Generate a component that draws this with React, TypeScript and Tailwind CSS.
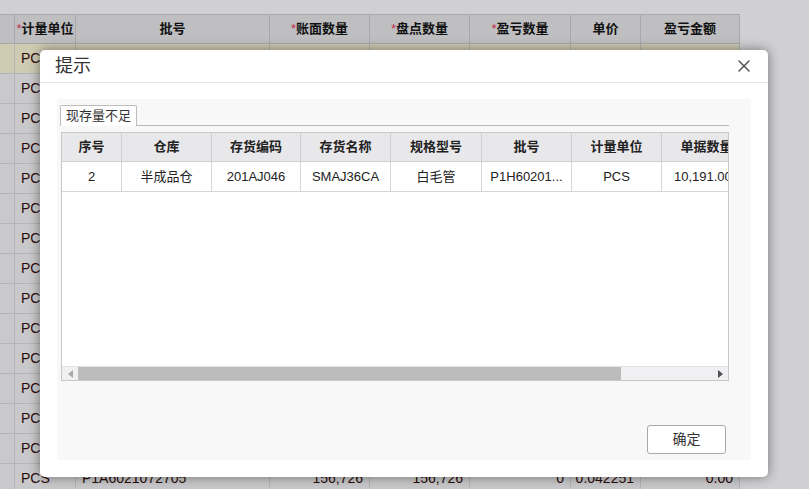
import { X } from "lucide-react";

const FONT = { fontFamily: '"Liberation Sans", "Noto Sans CJK SC", sans-serif' };

const bgCols = [
  { w: "w-[15px]", label: "" },
  { w: "w-[61px]", label: "计量单位", req: true },
  { w: "w-[194px]", label: "批号" },
  { w: "w-[100px]", label: "账面数量", req: true },
  { w: "w-[100px]", label: "盘点数量", req: true },
  { w: "w-[101px]", label: "盈亏数量", req: true },
  { w: "w-[70px]", label: "单价" },
  { w: "w-[99px]", label: "盈亏金额" },
];

const bgRow = ["", "PCS", "P1A6021072705", "156,726", "156,726", "0", "0.042251", "0.00"];

const dlgCols = [
  { w: "w-[60px]", label: "序号", v: "2" },
  { w: "w-[90px]", label: "仓库", v: "半成品仓" },
  { w: "w-[89px]", label: "存货编码", v: "201AJ046" },
  { w: "w-[90px]", label: "存货名称", v: "SMAJ36CA" },
  { w: "w-[91px]", label: "规格型号", v: "白毛管" },
  { w: "w-[90px]", label: "批号", v: "P1H60201..." },
  { w: "w-[90px]", label: "计量单位", v: "PCS" },
  { w: "w-[90px]", label: "单据数量", v: "10,191.000" },
];

function BackgroundGrid() {
  return (
    <div className="w-[809px] h-[489px] bg-[#d0d0d2] overflow-hidden">
      <div className="h-[14px]" />
      <div className="flex w-[740px] h-[30px] bg-[#bfbfc1] border-t border-b border-[#a9a9ab]">
        {bgCols.map((c, i) => (
          <div
            key={i}
            className={`${c.w} shrink-0 border-r border-[#a9a9ab] flex items-center justify-center text-[13px] font-bold text-[#111] whitespace-nowrap overflow-hidden`}
          >
            {c.req && <span className="text-[#c0304a] font-normal">*</span>}
            {c.label}
          </div>
        ))}
      </div>
      {Array.from({ length: 15 }).map((_, r) => (
        <div
          key={r}
          className={`flex w-[740px] h-[30px] border-b border-[#b4b4b6] ${r === 0 ? "bg-[#cfcbb2]" : "bg-[#c9c9cb]"}`}
        >
          {bgCols.map((c, i) => (
            <div
              key={i}
              className={`${c.w} shrink-0 border-r border-[#b4b4b6] flex items-center text-[14px] text-[#2a0a0a] whitespace-nowrap overflow-hidden px-[6px] ${i >= 3 ? "justify-end" : "justify-start"}`}
            >
              {bgRow[i]}
            </div>
          ))}
        </div>
      ))}
    </div>
  );
}

function Dialog() {
  return (
    <div className="absolute left-[40px] top-[50px] w-[728px] h-[427px] bg-white rounded-[5px] shadow-[0_0_12px_rgba(0,0,0,0.45)] flex flex-col">
      <div className="h-[33px] flex items-center justify-between pl-[15px] pr-[14px] border-b border-[#e6e6e6]">
        <span className="text-[18px] text-[#333]">提示</span>
        <X size={20} strokeWidth={1.8} className="text-[#555]" />
      </div>
      <div className="flex-1 px-[17px] pt-[16px] pb-[17px]">
        <div className="h-full bg-[#f8f8f8] flex flex-col pl-[3px] pr-[22px] pt-[6px]">
          <div className="flex border-b border-[#b9b9b9]">
            <div className="h-[21px] px-[5px] border border-b-0 border-[#bdbdbd] rounded-t-[2px] bg-white text-[13px] text-[#333] flex items-center -mb-px">
              现存量不足
            </div>
          </div>
          <div className="mt-[6px] ml-[1px] h-[249px] border border-[#c8c8c8] bg-white flex flex-col overflow-hidden">
            <div className="flex h-[29px] bg-[#e8e7ea] border-b border-[#d0d0d0] shrink-0">
              {dlgCols.map((c, i) => (
                <div
                  key={i}
                  className={`${c.w} shrink-0 border-r border-[#d0d0d0] flex items-center justify-center text-[13px] font-bold text-[#222] whitespace-nowrap overflow-hidden`}
                >
                  {c.label}
                </div>
              ))}
            </div>
            <div className="flex h-[30px] border-b border-[#d6d6d6] shrink-0">
              {dlgCols.map((c, i) => (
                <div
                  key={i}
                  className={`${c.w} shrink-0 border-r border-[#d6d6d6] flex items-center justify-center text-[13px] text-[#222] whitespace-nowrap overflow-hidden`}
                >
                  {c.v}
                </div>
              ))}
            </div>
            <div className="flex-1" />
            <div className="h-[14px] flex bg-[#f0eff1] border-t border-[#e0e0e0] shrink-0">
              <div className="w-[16px] flex items-center justify-center">
                <svg width="5" height="8" viewBox="0 0 5 8">
                  <path d="M5 0 L0 4 L5 8 Z" fill="#a8a8a8" />
                </svg>
              </div>
              <div className="w-[543px] bg-[#bcbcbc]" />
              <div className="flex-1" />
              <div className="w-[16px] flex items-center justify-center">
                <svg width="5" height="8" viewBox="0 0 5 8">
                  <path d="M0 0 L5 4 L0 8 Z" fill="#505050" />
                </svg>
              </div>
            </div>
          </div>
          <div className="flex-1 flex items-end justify-end pb-[6px] mr-[3px]">
            <button className="w-[79px] h-[29px] border border-[#a8a8a8] rounded-[3px] bg-white text-[14px] text-[#333]">
              确定
            </button>
          </div>
        </div>
      </div>
    </div>
  );
}

export default function App() {
  return (
    <div className="relative w-[809px] h-[489px] overflow-hidden" style={FONT}>
      <BackgroundGrid />
      <Dialog />
    </div>
  );
}
